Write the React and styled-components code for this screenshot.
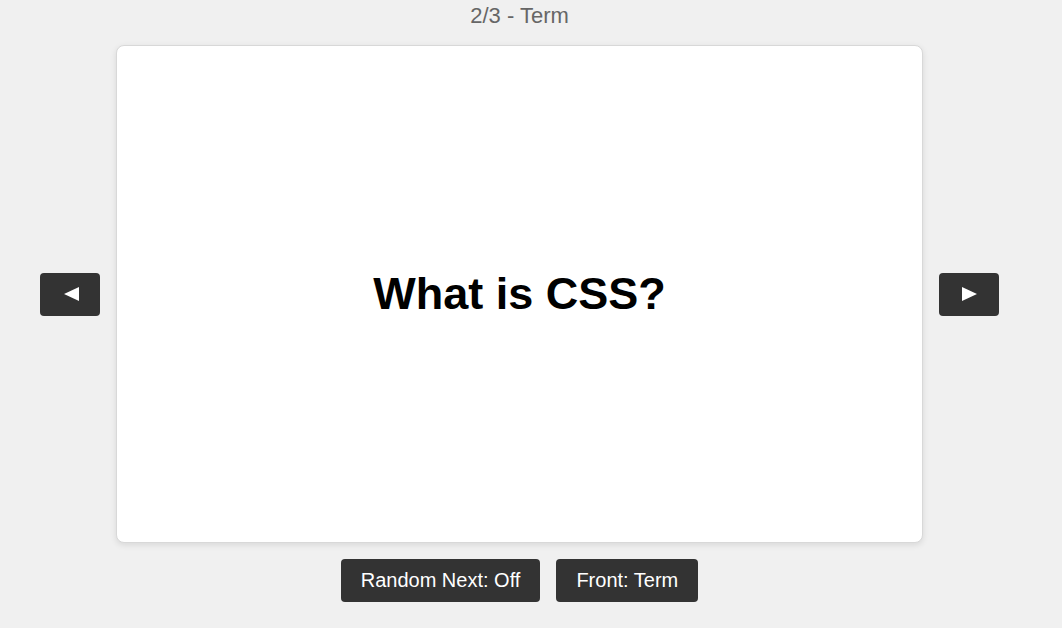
import React, { useState } from "react";
import styled, { createGlobalStyle } from "styled-components";

const GlobalStyle = createGlobalStyle`
  html, body {
    margin: 0;
    padding: 0;
    background: #f0f0f0;
    font-family: "Liberation Sans", Arial, sans-serif;
  }
`;

const Page = styled.div`
  width: 1039px;
  padding-top: 3px;
  display: flex;
  flex-direction: column;
  align-items: center;
`;

const Counter = styled.div`
  font-size: 22px;
  line-height: 25px;
  color: #666;
  margin-bottom: 17px;
`;

const Stage = styled.div`
  display: flex;
  align-items: center;
  justify-content: center;
  gap: 16px;
`;

const Card = styled.div`
  box-sizing: border-box;
  width: 807px;
  height: 498px;
  background: #fff;
  border: 1px solid #d8d8d8;
  border-radius: 8px;
  box-shadow: 0 2px 6px rgba(0, 0, 0, 0.1);
  display: flex;
  align-items: center;
  justify-content: center;
`;

const CardText = styled.h2`
  margin: 0;
  font-size: 45px;
  font-weight: bold;
  color: #000;
`;

const DarkButton = styled.button`
  box-sizing: border-box;
  height: 43px;
  padding: 0 20px;
  border: none;
  border-radius: 4px;
  background: #333;
  color: #fff;
  font-family: "Liberation Sans", Arial, sans-serif;
  font-size: 20px;
  cursor: pointer;
  display: flex;
  align-items: center;
  justify-content: center;
`;

const NavButton = styled(DarkButton)`
  width: 60px;
  padding: 0 0 0 ${(p) => (p.$dir === "left" ? "2px" : "1px")};
`;

const Arrow = ({ dir }) => (
  <svg width="15" height="14" viewBox="0 0 15 14" aria-hidden="true">
    {dir === "left" ? (
      <polygon points="15,0 15,14 0,7" fill="#fff" />
    ) : (
      <polygon points="0,0 0,14 15,7" fill="#fff" />
    )}
  </svg>
);

const Controls = styled.div`
  display: flex;
  gap: 16px;
  margin-top: 16px;
`;

export default function App() {
  const [random, setRandom] = useState(false);
  return (
    <>
      <GlobalStyle />
      <Page>
        <Counter>2/3 - Term</Counter>
        <Stage>
          <NavButton $dir="left" aria-label="Previous">
            <Arrow dir="left" />
          </NavButton>
          <Card>
            <CardText>What is CSS?</CardText>
          </Card>
          <NavButton $dir="right" aria-label="Next">
            <Arrow dir="right" />
          </NavButton>
        </Stage>
        <Controls>
          <DarkButton onClick={() => setRandom(!random)}>
            Random Next: {random ? "On" : "Off"}
          </DarkButton>
          <DarkButton>Front: Term</DarkButton>
        </Controls>
      </Page>
    </>
  );
}
